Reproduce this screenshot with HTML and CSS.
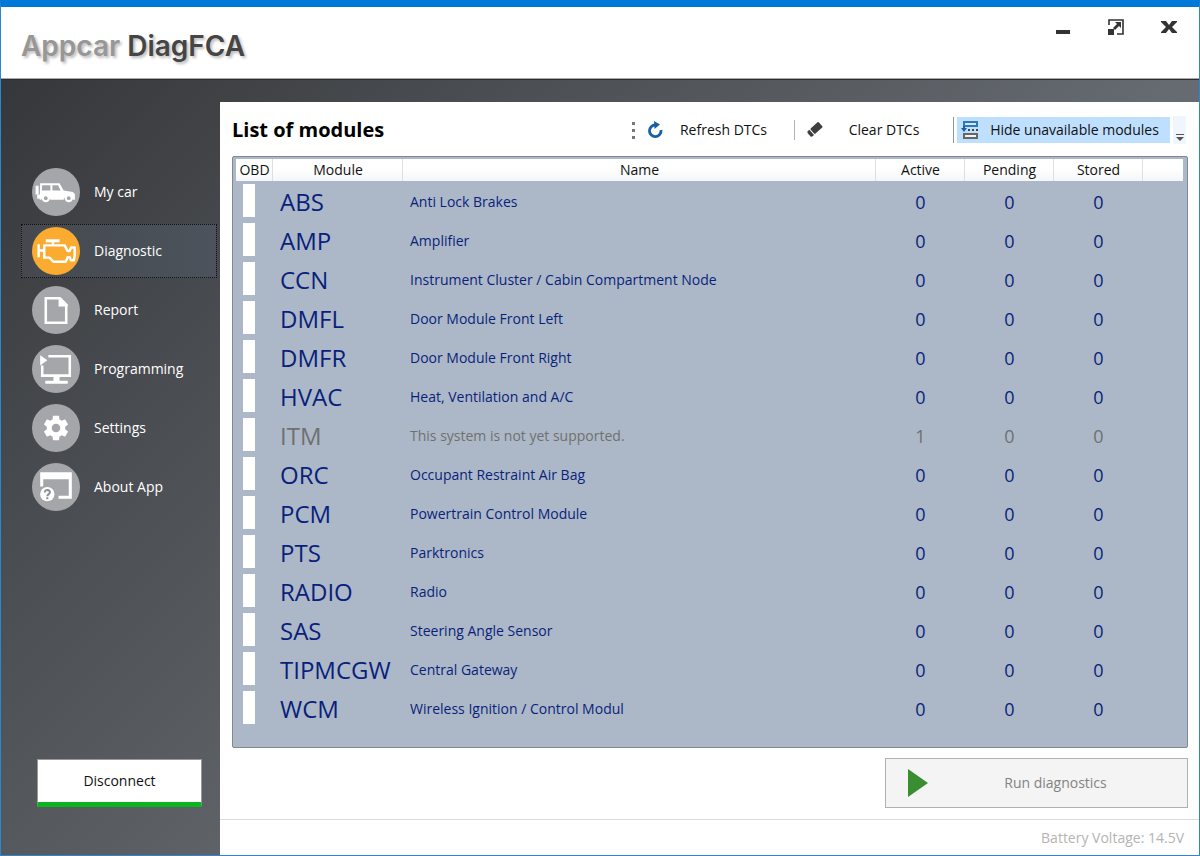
FILE: index.html
```html
<!DOCTYPE html>
<html lang="en">
<head>
<meta charset="utf-8">
<title>Appcar DiagFCA</title>
<link rel="stylesheet" href="styles.css">
</head>
<body>
<div class="window">
  <header class="titlebar">
    <div class="logo"><span class="logo-light">Appcar</span> <span class="logo-dark">DiagFCA</span></div>
    <div class="window-controls">
      <button type="button" aria-label="Minimize"><svg width="18" height="18" viewBox="0 0 18 18"><path d="M2 12h14v4H2z" fill="#333"/></svg></button>
      <button type="button" aria-label="Maximize"><svg width="18" height="18" viewBox="0 0 18 18"><path d="M2 7V2h14v14h-6" fill="none" stroke="#333" stroke-width="1.600"/><path d="M1 11h6v6H1zM8 4h6v6l-2-2-4 4-2-2 4-4z" fill="#333"/></svg></button>
      <button type="button" aria-label="Close"><svg width="18" height="18" viewBox="0 0 18 18"><path d="M1 3h5l3 4 3-4h5v1l-5 5 5 5v1h-5l-3-4-3 4H1v-1l5-5-5-5z" fill="#333"/></svg></button>
    </div>
  </header>
  <div class="body">
    <nav class="sidebar">
      <div class="menu">
        <button type="button" class="menu-item">
          <svg class="disc" viewBox="0 0 47 47"><circle class="disc-bg" cx="23.500" cy="23.500" r="23.500"/><path fill="#fff" fill-rule="evenodd" d="M3.500 17.500h3V26h-3zM8 15h19l4 7 9 1.500 2 2V31h-2a4.600 4.600 0 0 0-9 0H18a4.600 4.600 0 0 0-9 0H7.500zM10 17l-.5 5H18v-5zM20 17v5h8l-2.500-5z"/><path fill="#fff" d="M5 26h4v4H5z"/><g fill="#a5a6aa" stroke="#fff" stroke-width="2.200"><circle cx="13.500" cy="29.500" r="3"/><circle cx="36" cy="29.500" r="3"/></g></svg>
          <span>My car</span>
        </button>
        <button type="button" class="menu-item selected">
          <svg class="disc" viewBox="0 0 47 47"><circle class="disc-bg" cx="23.500" cy="23.500" r="23.500"/><path fill="none" stroke="#fff" stroke-width="2.400" stroke-linejoin="round" d="M6.500 17v12.500M6.500 23H12M12 18v12h5l4 4h12l2-4.500h2l1 3h3l.8-4V20h-3.500l-1.500 3.500h-2L32 18H12zM20.500 18v-5"/><path fill="#fff" d="M13.500 12h13.500v3H13.500z"/></svg>
          <span>Diagnostic</span>
        </button>
        <button type="button" class="menu-item">
          <svg class="disc" viewBox="0 0 47 47"><circle class="disc-bg" cx="23.500" cy="23.500" r="23.500"/><path fill="none" stroke="#fff" stroke-width="2.500" d="M13.500 12H27l6.500 6.500V36h-20z"/><path fill="#fff" d="M26 11h2l7 7v2h-9z"/></svg>
          <span>Report</span>
        </button>
        <button type="button" class="menu-item">
          <svg class="disc" viewBox="0 0 47 47"><circle class="disc-bg" cx="23.500" cy="23.500" r="23.500"/><path fill="none" stroke="#fff" stroke-width="2.500" d="M16 11h21v19H10V20"/><path fill="#fff" d="M8 10l7 5-7 5zM21 31h6v4h8v3H13v-3h8z"/></svg>
          <span>Programming</span>
        </button>
        <button type="button" class="menu-item">
          <svg class="disc" viewBox="0 0 47 47"><circle class="disc-bg" cx="23.500" cy="23.500" r="23.500"/><path transform="translate(9.100 9.100) scale(1.200)" fill="#fff" fill-rule="evenodd" d="M19.430 12.980c.04-.32.070-.64.070-.98s-.03-.66-.07-.98l2.110-1.650c.19-.15.240-.42.120-.64l-2-3.460c-.12-.22-.39-.3-.61-.22l-2.490 1c-.52-.4-1.080-.73-1.690-.98l-.38-2.650A.49.490 0 0 0 14 2h-4c-.25 0-.46.180-.49.420l-.38 2.650c-.61.250-1.170.590-1.690.98l-2.490-1c-.23-.09-.49 0-.61.220l-2 3.460c-.13.220-.07.490.12.640l2.110 1.650c-.4.320-.07.650-.07.980s.3.660.07.980l-2.110 1.650c-.19.150-.24.420-.12.640l2 3.460c.12.220.39.300.61.220l2.490-1c.52.400 1.080.730 1.690.980l.38 2.650c.3.240.24.420.49.420h4c.25 0 .46-.18.490-.42l.38-2.650c.61-.25 1.170-.59 1.690-.98l2.490 1c.23.090.49 0 .61-.22l2-3.460c.12-.22.070-.49-.12-.64zM12 15.500a3.500 3.500 0 1 1 0-7 3.500 3.500 0 0 1 0 7z"/></svg>
          <span>Settings</span>
        </button>
        <button type="button" class="menu-item">
          <svg class="disc" viewBox="0 0 47 47"><circle class="disc-bg" cx="23.500" cy="23.500" r="23.500"/><path fill="#fff" d="M8 9h31v26H26v-3h10V16H11v7H8z"/><circle cx="15" cy="30.500" r="7" fill="#fff"/><path fill="none" stroke="#8e8f93" stroke-width="2" d="M12.500 29c0-4 5.500-3 5 0-.3 1.500-2.500 1.500-2.500 3.500M15 33.500v2"/></svg>
          <span>About App</span>
        </button>
      </div>
      <button type="button" class="disconnect">Disconnect</button>
    </nav>
    <main class="content">
      <div class="heading">
        <h1>List of modules</h1>
        <div class="toolbar">
          <span class="grip"></span>
          <button type="button" class="tool refresh"><svg width="18" height="18" viewBox="0 0 18 18"><path d="M9.500 4A5.800 5.800 0 1 0 15 9" fill="none" stroke="#1560a8" stroke-width="2.800"/><path d="M8 0l6 3.500L8.500 8z" fill="#1560a8"/></svg><span>Refresh DTCs</span></button>
          <button type="button" class="tool clear"><svg width="18" height="18" viewBox="0 0 18 18"><g transform="rotate(-42 9 9)" fill="#3f3f41"><rect x="6" y="5" width="11" height="7" rx="1"/><path d="M5 5v7H3a1.500 1.500 0 0 1-1.500-1.500v-4A1.500 1.500 0 0 1 3 5z"/></g></svg><span>Clear DTCs</span></button>
          <button type="button" class="tool hide" aria-pressed="true"><svg width="18" height="18" viewBox="0 0 18 18"><path d="M3 1h13v4H3z" fill="#d3e6f5" stroke="#2d79b5" stroke-width="2"/><path d="M3 13h13v4H3z" fill="#f3f3f3" stroke="#666" stroke-width="2"/><path d="M3 5v4" stroke="#1560a8" stroke-width="2"/><path d="M0 7h6l-3 4z" fill="#1560a8"/><path d="M7 8h2v2H7zM11 8h2v2h-2zM15 8h2v2h-2z" fill="#444"/></svg><span>Hide unavailable modules</span></button>
          <button type="button" class="overflow" aria-label="Toolbar options"><svg width="8" height="8" viewBox="0 0 8 8"><path d="M0 0h8v1H0zM0 3h8L4 7z" fill="#555"/></svg></button>
        </div>
      </div>
      <div class="list">
        <table class="modules">
          <colgroup><col class="c-obd"><col class="c-module"><col><col class="c-count"><col class="c-count"><col class="c-count"><col class="c-end"></colgroup>
          <thead><tr><th>OBD</th><th>Module</th><th>Name</th><th>Active</th><th>Pending</th><th>Stored</th><th></th></tr></thead>
          <tbody>
            <tr><td><i class="flag"></i></td><td class="code">ABS</td><td>Anti Lock Brakes</td><td class="num">0</td><td class="num">0</td><td class="num">0</td><td></td></tr>
            <tr><td><i class="flag"></i></td><td class="code">AMP</td><td>Amplifier</td><td class="num">0</td><td class="num">0</td><td class="num">0</td><td></td></tr>
            <tr><td><i class="flag"></i></td><td class="code">CCN</td><td>Instrument Cluster / Cabin Compartment Node</td><td class="num">0</td><td class="num">0</td><td class="num">0</td><td></td></tr>
            <tr><td><i class="flag"></i></td><td class="code">DMFL</td><td>Door Module Front Left</td><td class="num">0</td><td class="num">0</td><td class="num">0</td><td></td></tr>
            <tr><td><i class="flag"></i></td><td class="code">DMFR</td><td>Door Module Front Right</td><td class="num">0</td><td class="num">0</td><td class="num">0</td><td></td></tr>
            <tr><td><i class="flag"></i></td><td class="code">HVAC</td><td>Heat, Ventilation and A/C</td><td class="num">0</td><td class="num">0</td><td class="num">0</td><td></td></tr>
            <tr class="unsupported"><td><i class="flag"></i></td><td class="code">ITM</td><td>This system is not yet supported.</td><td class="num">1</td><td class="num">0</td><td class="num">0</td><td></td></tr>
            <tr><td><i class="flag"></i></td><td class="code">ORC</td><td>Occupant Restraint Air Bag</td><td class="num">0</td><td class="num">0</td><td class="num">0</td><td></td></tr>
            <tr><td><i class="flag"></i></td><td class="code">PCM</td><td>Powertrain Control Module</td><td class="num">0</td><td class="num">0</td><td class="num">0</td><td></td></tr>
            <tr><td><i class="flag"></i></td><td class="code">PTS</td><td>Parktronics</td><td class="num">0</td><td class="num">0</td><td class="num">0</td><td></td></tr>
            <tr><td><i class="flag"></i></td><td class="code">RADIO</td><td>Radio</td><td class="num">0</td><td class="num">0</td><td class="num">0</td><td></td></tr>
            <tr><td><i class="flag"></i></td><td class="code">SAS</td><td>Steering Angle Sensor</td><td class="num">0</td><td class="num">0</td><td class="num">0</td><td></td></tr>
            <tr><td><i class="flag"></i></td><td class="code">TIPMCGW</td><td>Central Gateway</td><td class="num">0</td><td class="num">0</td><td class="num">0</td><td></td></tr>
            <tr><td><i class="flag"></i></td><td class="code">WCM</td><td>Wireless Ignition / Control Modul</td><td class="num">0</td><td class="num">0</td><td class="num">0</td><td></td></tr>
          </tbody>
        </table>
      </div>
      <div class="actions">
        <button type="button" class="run" disabled><svg width="20" height="28" viewBox="0 0 20 28"><path d="M0 0l20 14L0 28z" fill="#388e30"/></svg><span>Run diagnostics</span></button>
      </div>
      <footer class="status">Battery Voltage: 14.5V</footer>
    </main>
  </div>
</div>
</body>
</html>
```
FILE: styles.css
```css
* { box-sizing: border-box; }
body {
  margin: 0;
  font: 14px/20px "Open Sans", "Noto Sans", sans-serif;
  color: #111;
}
button { font: inherit; color: inherit; margin: 0; padding: 0; border: 0; background: none; }
svg { display: block; flex: none; }

.window {
  display: flex;
  flex-direction: column;
  min-height: 100vh;
  border: 1px solid #2a87d3;
  border-top: 7px solid #0078d7;
  background: #fff;
}
.titlebar {
  display: flex;
  justify-content: space-between;
  align-items: flex-start;
  height: 72px;
  padding: 11px 21px 0 20px;
  border-bottom: 1px solid #aaa;
}
.logo {
  padding-top: 10px;
  font: 600 28px/36px "Inter", sans-serif;
  text-shadow: 2px 2px 3px #bbb;
}
.logo-light { color: #979797; }
.logo-dark { color: #454545; }
.window-controls { display: flex; gap: 35px; }

.body {
  flex: 1;
  display: flex;
  padding-top: 22px;
  border-top: 1px solid #2c2d2f;
  background: linear-gradient(135deg, #36373a 0%, #46494d 20%, #565a5f 40%, #666b71 60%, #6b7178 100%);
}
.sidebar {
  flex: none;
  display: flex;
  flex-direction: column;
  justify-content: space-between;
  width: 219px;
  padding: 63px 3px 48px 20px;
}
.menu { display: flex; flex-direction: column; gap: 5px; }
.menu-item {
  display: flex;
  align-items: center;
  gap: 14px;
  height: 54px;
  padding-left: 10px;
  border: 1px dotted transparent;
  color: #fff;
}
.menu-item.selected { border-color: #111; background: linear-gradient(90deg, #45494f, #4c535c); }
.disc { width: 48px; height: 48px; }
.disc-bg { fill: #a5a6aa; }
.selected .disc-bg { fill: #fbab30; }
.disconnect {
  height: 48px;
  margin: 0 15px 0 16px;
  border: 1px solid #999;
  border-bottom: 5px solid #08b51f;
  background: #fff;
}

.content { flex: 1; display: flex; flex-direction: column; min-width: 0; background: #fff; }
.heading {
  display: flex;
  justify-content: space-between;
  align-items: center;
  height: 54px;
  padding: 2px 13px 0 12px;
}
h1 { margin: 0; font-size: 20px; line-height: 28px; font-weight: 700; color: #000; }
.toolbar { display: flex; align-items: center; }
.grip { width: 3px; height: 17px; border-left: 3px dotted #777; }
.tool { display: flex; align-items: center; height: 26px; }
.tool span { flex: 1; text-align: center; }
.refresh { width: 159px; padding: 0 11px; }
.clear { width: 163px; height: 20px; padding: 0 13px 0 11px; border-left: 1px solid #aeb4bc; }
.hide { width: 213px; padding-left: 4px; background: #bfdfff; box-shadow: -3px 0 0 #fff, -4px 0 0 #8897ad; }
.overflow {
  display: flex;
  align-items: flex-end;
  justify-content: center;
  width: 13px;
  height: 28px;
  margin-left: 3px;
  padding-bottom: 2px;
  background: #f0f6fd;
}

.list {
  flex: 1;
  margin: 0 11px 0 12px;
  padding: 2px 4px 2px 3px;
  border: 1px solid #828790;
  border-radius: 2px;
  background: #acb8c7;
}
.modules { width: 100%; table-layout: fixed; border-collapse: collapse; }
.c-obd { width: 37px; }
.c-module { width: 130px; }
.c-count { width: 89px; }
.c-end { width: 40px; }
th {
  height: 22px;
  padding: 0;
  font-weight: 400;
  line-height: 20px;
  text-align: center;
  background: linear-gradient(#fff 40%, #f5f6f8);
  box-shadow: inset -1px 0 0 #dedfe1;
}
th:last-child { box-shadow: none; }
td { height: 39px; padding: 2px 0 0 7px; line-height: 20px; color: #0a1f7c; white-space: nowrap; }
td:first-child { padding-top: 0; }
.flag { display: block; width: 12px; height: 33px; background: #fff; }
td.code { padding-top: 3px; font-size: 24px; line-height: 32px; }
td.num { padding: 3px 0 0; text-align: center; font-size: 18px; }
.unsupported td { color: #707070; }

.actions { display: flex; justify-content: flex-end; padding: 10px 11px 11px; }
.run {
  display: flex;
  align-items: center;
  width: 303px;
  height: 50px;
  padding: 0 22px;
  border: 1px solid #adb2b5;
  background: #f4f4f4;
  color: #838383;
}
.run span { flex: 1; padding-left: 18px; text-align: center; }
.status {
  height: 36px;
  padding: 8px 15px 0;
  border-top: 1px solid #dcdcdc;
  text-align: right;
  color: #b4b4b4;
}
```
